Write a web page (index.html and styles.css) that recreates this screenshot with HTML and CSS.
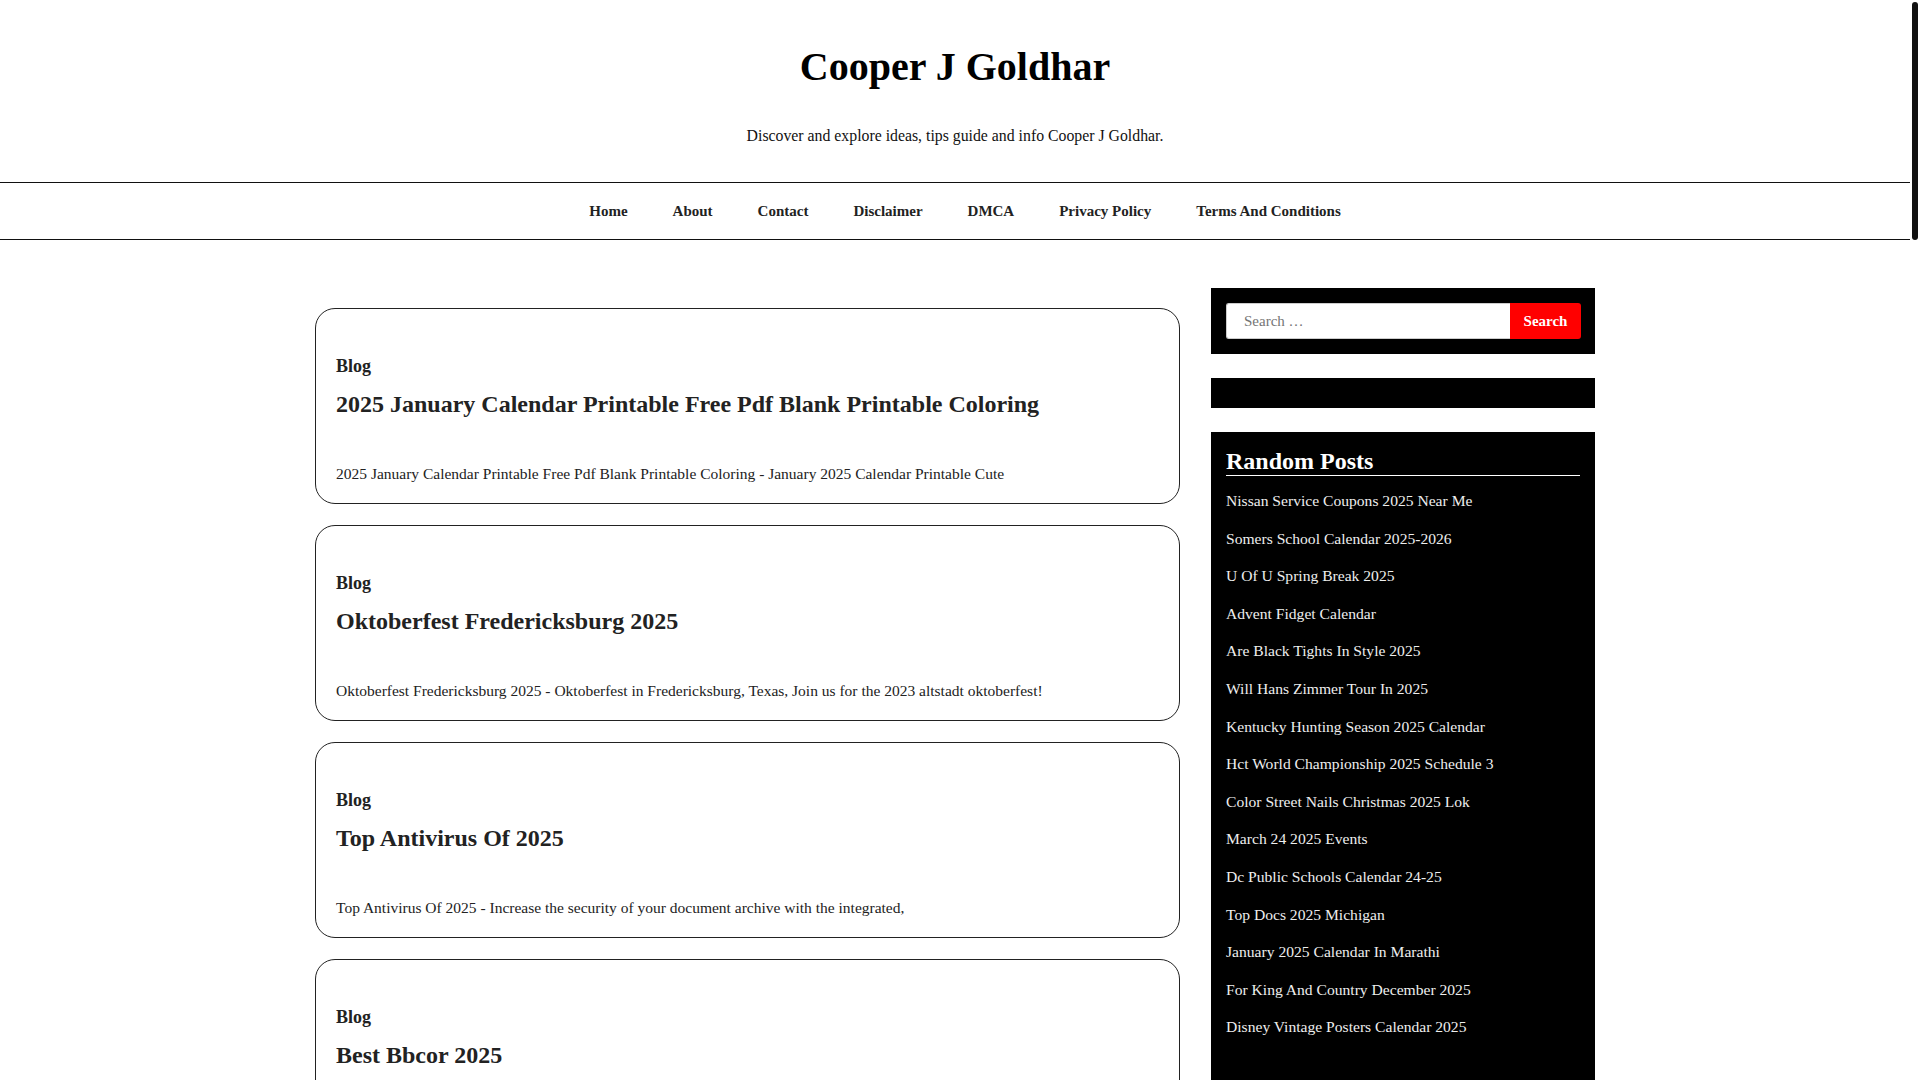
FILE: index.html
```html
<!DOCTYPE html>
<html lang="en">
<head>
<meta charset="utf-8">
<title>Cooper J Goldhar</title>
<link rel="stylesheet" href="styles.css">
</head>
<body>
<div class="page">
<header class="site-header">
  <h1 class="site-title">Cooper J Goldhar</h1>
  <p class="site-desc">Discover and explore ideas, tips guide and info Cooper J Goldhar.</p>
</header>
<nav class="main-nav">
  <ul class="menu">
    <li><a href="#">Home</a></li>
    <li><a href="#">About</a></li>
    <li><a href="#">Contact</a></li>
    <li><a href="#">Disclaimer</a></li>
    <li><a href="#">DMCA</a></li>
    <li><a href="#">Privacy Policy</a></li>
    <li><a href="#">Terms And Conditions</a></li>
  </ul>
</nav>
<div class="container">
  <main class="posts">
    <article class="card">
      <div class="cat">Blog</div>
      <h2 class="card-title">2025 January Calendar Printable Free Pdf Blank Printable Coloring</h2>
      <p class="excerpt">2025 January Calendar Printable Free Pdf Blank Printable Coloring - January 2025 Calendar Printable Cute</p>
    </article>
    <article class="card">
      <div class="cat">Blog</div>
      <h2 class="card-title">Oktoberfest Fredericksburg 2025</h2>
      <p class="excerpt">Oktoberfest Fredericksburg 2025 - Oktoberfest in Fredericksburg, Texas, Join us for the 2023 altstadt oktoberfest!</p>
    </article>
    <article class="card">
      <div class="cat">Blog</div>
      <h2 class="card-title">Top Antivirus Of 2025</h2>
      <p class="excerpt">Top Antivirus Of 2025 - Increase the security of your document archive with the integrated,</p>
    </article>
    <article class="card">
      <div class="cat">Blog</div>
      <h2 class="card-title">Best Bbcor 2025</h2>
      <p class="excerpt">Best Bbcor 2025 - Find the best bbcor bats of the year, reviewed and compared.</p>
    </article>
    <article class="card">
      <div class="cat">Blog</div>
      <h2 class="card-title">Nissan Service Coupons 2025 Near Me</h2>
      <p class="excerpt">Nissan Service Coupons 2025 Near Me - Save on maintenance at your local dealer.</p>
    </article>
    <article class="card">
      <div class="cat">Blog</div>
      <h2 class="card-title">Somers School Calendar 2025-2026</h2>
      <p class="excerpt">Somers School Calendar 2025-2026 - Important dates for the upcoming school year.</p>
    </article>
    <article class="card">
      <div class="cat">Blog</div>
      <h2 class="card-title">U Of U Spring Break 2025</h2>
      <p class="excerpt">U Of U Spring Break 2025 - Plan your spring break with the official dates.</p>
    </article>
    <article class="card">
      <div class="cat">Blog</div>
      <h2 class="card-title">Advent Fidget Calendar</h2>
      <p class="excerpt">Advent Fidget Calendar - Count down the days with a fidget toy every day.</p>
    </article>
    <article class="card">
      <div class="cat">Blog</div>
      <h2 class="card-title">Are Black Tights In Style 2025</h2>
      <p class="excerpt">Are Black Tights In Style 2025 - Styling ideas for the new season.</p>
    </article>
    <article class="card">
      <div class="cat">Blog</div>
      <h2 class="card-title">Will Hans Zimmer Tour In 2025</h2>
      <p class="excerpt">Will Hans Zimmer Tour In 2025 - Tour dates and ticket information.</p>
    </article>
    <article class="card">
      <div class="cat">Blog</div>
      <h2 class="card-title">Kentucky Hunting Season 2025 Calendar</h2>
      <p class="excerpt">Kentucky Hunting Season 2025 Calendar - Season dates for every game.</p>
    </article>
    <article class="card">
      <div class="cat">Blog</div>
      <h2 class="card-title">Hct World Championship 2025 Schedule 3</h2>
      <p class="excerpt">Hct World Championship 2025 Schedule 3 - Full match schedule and results.</p>
    </article>
    <article class="card">
      <div class="cat">Blog</div>
      <h2 class="card-title">Color Street Nails Christmas 2025 Lok</h2>
      <p class="excerpt">Color Street Nails Christmas 2025 Lok - Holiday nail designs to try.</p>
    </article>
    <article class="card">
      <div class="cat">Blog</div>
      <h2 class="card-title">March 24 2025 Events</h2>
      <p class="excerpt">March 24 2025 Events - Things to do and see this day.</p>
    </article>
    <article class="card">
      <div class="cat">Blog</div>
      <h2 class="card-title">Dc Public Schools Calendar 24-25</h2>
      <p class="excerpt">Dc Public Schools Calendar 24-25 - Holidays, breaks and key dates.</p>
    </article>
    <article class="card">
      <div class="cat">Blog</div>
      <h2 class="card-title">Top Docs 2025 Michigan</h2>
      <p class="excerpt">Top Docs 2025 Michigan - The highest rated physicians in the state.</p>
    </article>
    <article class="card">
      <div class="cat">Blog</div>
      <h2 class="card-title">January 2025 Calendar In Marathi</h2>
      <p class="excerpt">January 2025 Calendar In Marathi - Festivals and holidays of the month.</p>
    </article>
    <article class="card">
      <div class="cat">Blog</div>
      <h2 class="card-title">For King And Country December 2025</h2>
      <p class="excerpt">For King And Country December 2025 - Christmas tour dates.</p>
    </article>
    <article class="card">
      <div class="cat">Blog</div>
      <h2 class="card-title">Disney Vintage Posters Calendar 2025</h2>
      <p class="excerpt">Disney Vintage Posters Calendar 2025 - Classic artwork for every month.</p>
    </article>
  </main>
  <aside class="sidebar">
    <section class="widget widget-search">
      <form class="search-form">
        <input class="search-field" type="search" placeholder="Search …">
        <button class="search-submit" type="button">Search</button>
      </form>
    </section>
    <section class="widget widget-empty"></section>
    <section class="widget widget-posts">
      <h3 class="widget-title">Random Posts</h3>
      <ul class="post-list">
        <li><a href="#">Nissan Service Coupons 2025 Near Me</a></li>
        <li><a href="#">Somers School Calendar 2025-2026</a></li>
        <li><a href="#">U Of U Spring Break 2025</a></li>
        <li><a href="#">Advent Fidget Calendar</a></li>
        <li><a href="#">Are Black Tights In Style 2025</a></li>
        <li><a href="#">Will Hans Zimmer Tour In 2025</a></li>
        <li><a href="#">Kentucky Hunting Season 2025 Calendar</a></li>
        <li><a href="#">Hct World Championship 2025 Schedule 3</a></li>
        <li><a href="#">Color Street Nails Christmas 2025 Lok</a></li>
        <li><a href="#">March 24 2025 Events</a></li>
        <li><a href="#">Dc Public Schools Calendar 24-25</a></li>
        <li><a href="#">Top Docs 2025 Michigan</a></li>
        <li><a href="#">January 2025 Calendar In Marathi</a></li>
        <li><a href="#">For King And Country December 2025</a></li>
        <li><a href="#">Disney Vintage Posters Calendar 2025</a></li>
      </ul>
    </section>
  </aside>
</div>
</div>
<div class="scroll-thumb"></div>
</body>
</html>
```

FILE: styles.css
```css
html {
  background: #fff;
}
body {
  margin: 0;
  font-family: "Liberation Serif", "Times New Roman", serif;
  color: #222;
  background: #fff;
}
.page {
  margin-right: 10px;
}
.scroll-thumb {
  position: fixed;
  top: 2px;
  right: 2px;
  width: 6px;
  height: 238px;
  border-radius: 3px;
  background: #111;
}
a {
  color: inherit;
  text-decoration: none;
}
.site-header {
  text-align: center;
  padding: 43px 0 34px;
}
.site-title {
  margin: 0 0 33px;
  font-size: 40px;
  line-height: 48px;
  font-weight: 700;
  color: #000;
}
.site-desc {
  margin: 0;
  font-size: 15.8px;
  line-height: 24px;
  color: #111;
}
.main-nav {
  border-top: 1px solid #111;
  border-bottom: 1px solid #111;
}
.menu {
  list-style: none;
  margin: 0;
  padding: 0 0 0 20px;
  display: flex;
  justify-content: center;
  gap: 45px;
}
.menu a {
  display: block;
  font-size: 15px;
  font-weight: 700;
  line-height: 56px;
  color: #222;
}
.container {
  width: 1280px;
  margin: 0 auto;
  padding-top: 48px;
  display: grid;
  grid-template-columns: 1fr 384px;
  gap: 31px;
  align-items: start;
}
.posts {
  padding-top: 20px;
}
.card {
  border: 1px solid #222;
  border-radius: 20px;
  padding: 44px 20px 17px;
  margin-bottom: 21px;
}
.cat {
  font-size: 18px;
  font-weight: 700;
  line-height: 27px;
  color: #222;
}
.card-title {
  margin: 9px 0 0;
  font-size: 24px;
  line-height: 31px;
  font-weight: 700;
  color: #222;
}
.excerpt {
  margin: 42px 0 0;
  font-size: 15.5px;
  line-height: 24px;
  color: #222;
}
.widget {
  background: #000;
  margin-bottom: 24px;
}
.widget-search {
  padding: 15px 14px 15px 15px;
}
.search-form {
  display: flex;
}
.search-field {
  flex: 1;
  min-width: 0;
  height: 36px;
  box-sizing: border-box;
  border: 1px solid #ccc;
  border-right: 0;
  border-radius: 3px 0 0 3px;
  padding: 0 17px;
  font-family: "Liberation Serif", serif;
  font-size: 15px;
  color: #333;
  background: #fff;
  outline: none;
}
.search-field::placeholder {
  color: #757575;
}
.search-submit {
  width: 71px;
  height: 36px;
  border: 0;
  border-radius: 0 3px 3px 0;
  background: #ff0000;
  color: #fff;
  font-family: "Liberation Serif", serif;
  font-size: 15px;
  font-weight: 700;
  cursor: pointer;
}
.widget-empty {
  height: 30px;
}
.widget-posts {
  padding: 15px 15px 40px;
  color: #eee;
}
.widget-title {
  margin: 0;
  font-size: 24px;
  line-height: 28px;
  font-weight: 700;
  color: #fff;
  border-bottom: 1px solid #fff;
}
.post-list {
  list-style: none;
  margin: 13px 0 0;
  padding: 0;
}
.post-list li {
  font-size: 15.6px;
  line-height: 24px;
  margin-bottom: 13.6px;
}
.post-list a {
  color: #eee;
}
```
